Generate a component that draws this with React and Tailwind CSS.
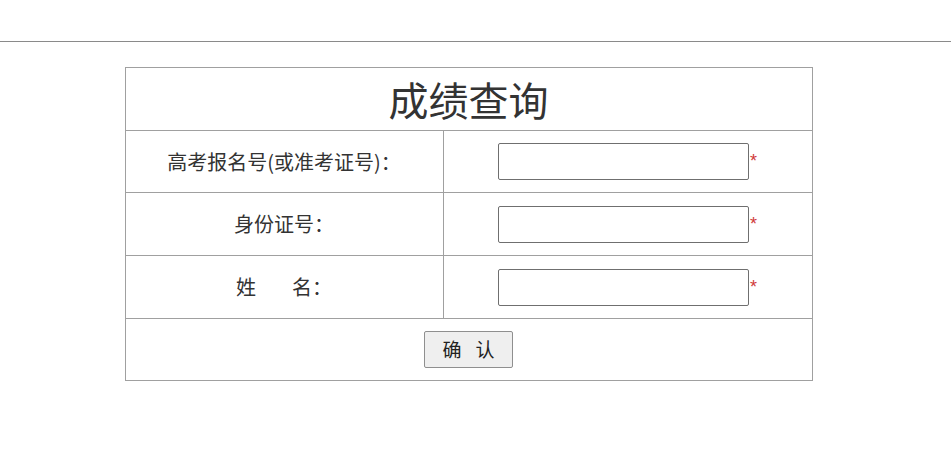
const font = { fontFamily: '"Noto Sans CJK SC", "Liberation Sans", sans-serif' }

const rows = [
  { label: '高考报名号(或准考证号)：', name: 'ksh', h: 'h-[62px]' },
  { label: '身份证号：', name: 'sfzh', h: 'h-[63px]' },
  { label: '姓\u00a0\u00a0\u00a0\u00a0\u00a0\u00a0\u00a0\u00a0名：', name: 'xm', h: 'h-[63px]' },
]

export default function App() {
  return (
    <div className="min-h-screen bg-white text-[#333]" style={font}>
      {/* top rule */}
      <div className="pt-[41px]">
        <div className="border-t border-[#8a8a8a]" />
      </div>

      <div className="w-[937px] pt-[25px]">
        <table className="mx-auto w-[688px] border-collapse border border-[#a0a0a0]">
          <tbody>
            <tr className="h-[63px]">
              <td colSpan={2} className="border border-[#a0a0a0] text-center text-[40px] leading-none">
                成绩查询
              </td>
            </tr>
            {rows.map((r) => (
              <tr key={r.name} className={r.h}>
                <td className="w-[318px] border border-[#a0a0a0] text-center text-[20px]">
                  {r.label}
                </td>
                <td className="border border-[#a0a0a0]">
                  <div className="flex items-center justify-center">
                    <input
                      type="text"
                      name={r.name}
                      className="h-[37px] w-[251px] rounded-[2px] border border-[#6f6f6f] bg-white px-1 outline-none"
                    />
                    <span className="ml-[1px] -mt-[1px] text-[18px] leading-none text-[#d03a3a]" style={{ fontFamily: '"Liberation Sans", sans-serif' }}>*</span>
                  </div>
                </td>
              </tr>
            ))}
            <tr className="h-[62px]">
              <td colSpan={2} className="border border-[#a0a0a0] text-center">
                <button
                  type="button"
                  className="h-[37px] w-[89px] rounded-[2px] border border-[#8f8f8f] bg-[#efefef] text-[19px] text-[#222]"
                  style={font}
                >
                  确<span className="inline-block w-[14px]" />认
                </button>
              </td>
            </tr>
          </tbody>
        </table>
      </div>
    </div>
  )
}
